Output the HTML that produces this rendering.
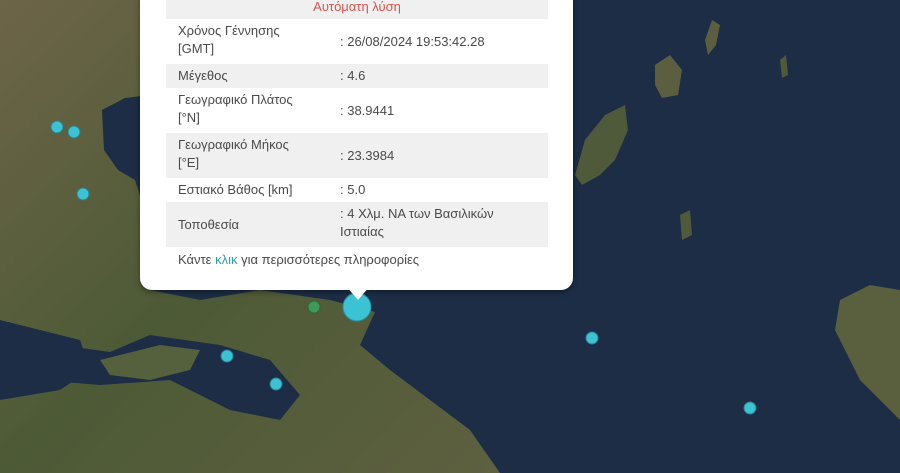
<!DOCTYPE html>
<html><head><meta charset="utf-8"><style>
body{margin:0;width:900px;height:473px;overflow:hidden;position:relative;background:#1c2d45;font-family:"Liberation Sans",sans-serif}
svg{position:absolute;left:0;top:0}
.pop{position:absolute;left:140px;top:-12px;width:433px;height:302px;background:#fff;border-radius:12px;box-shadow:0 2px 6px rgba(0,0,0,.4)}
.tip{position:absolute;left:346px;top:286px;width:0;height:0;border-left:12px solid transparent;border-right:12px solid transparent;border-top:14px solid #fff}
.row{position:absolute;left:166px;width:382px;font-size:13px;color:#4a4a4a;line-height:18px}
.row .k{position:absolute;left:12px}
.row .v{position:absolute;left:174px}
.g{background:#f0f0f0}
</style></head><body>
<svg width="900" height="473">
<defs><linearGradient id="l" x1="0" y1="0" x2="1" y2="1"><stop offset="0" stop-color="#6d6547"/><stop offset=".5" stop-color="#4d5a36"/><stop offset="1" stop-color="#5e6040"/></linearGradient></defs>
<path fill="url(#l)" d="M0 0H150V95L125 98L102 110L104 150L118 170L135 180L145 210L140 250L150 290L200 300L260 290L330 300L375 312L360 345L390 370L430 400L470 430L500 473H0V400L60 390L90 370L80 340L40 330L0 320Z"/>
<path fill="#1c2d45" d="M0 328L60 345L110 352L150 335L220 345L270 360L300 395L280 420L230 410L170 380L100 385L40 380L0 390Z"/>
<path fill="#55613c" d="M100 360L160 345L200 350L190 370L150 380L110 375Z"/>
<path fill="#5a603e" d="M840 300L870 285L900 290V420L880 400L860 380L845 350L835 330Z"/>
<path fill="#5b5f40" d="M655 65L670 55L682 70L678 95L662 98L655 85Z"/>
<path fill="#5b5f40" d="M705 40L712 20L720 25L716 45L708 55Z"/>
<path fill="#4f5a3a" d="M575 175L585 140L605 115L625 105L628 130L615 160L600 175L582 185Z"/>
<path fill="#4f5a3a" d="M680 215L690 210L692 235L682 240Z"/>
<path fill="#4f5a3a" d="M780 60L786 55L788 75L782 78Z"/>
<circle cx="57" cy="127" r="6" fill="#3cc3d3" stroke="#2a7f8c"/>
<circle cx="74" cy="132" r="6" fill="#3cc3d3" stroke="#2a7f8c"/>
<circle cx="83" cy="194" r="6" fill="#3cc3d3" stroke="#2a7f8c"/>
<circle cx="314" cy="307" r="6" fill="#3f9a5a" stroke="#2a6a3a"/>
<circle cx="357" cy="307" r="14" fill="#3cc3d3" stroke="#2a8f9c"/>
<circle cx="227" cy="356" r="6" fill="#3cc3d3" stroke="#2a7f8c"/>
<circle cx="276" cy="384" r="6" fill="#3cc3d3" stroke="#2a7f8c"/>
<circle cx="592" cy="338" r="6" fill="#3cc3d3" stroke="#2a7f8c"/>
<circle cx="750" cy="408" r="6" fill="#3cc3d3" stroke="#2a7f8c"/>
</svg>
<div class="pop"></div><div class="tip"></div>
<div class="row g" style="top:0;height:19px;text-align:center;color:#d9534f;line-height:14px">Αυτόματη λύση</div>
<div class="row" style="top:19px;height:45px"><span class="k" style="top:3px">Χρόνος Γέννησης<br>[GMT]</span><span class="v" style="top:14px">: 26/08/2024 19:53:42.28</span></div>
<div class="row g" style="top:64px;height:24px"><span class="k" style="top:3px">Μέγεθος</span><span class="v" style="top:3px">: 4.6</span></div>
<div class="row" style="top:88px;height:45px"><span class="k" style="top:3px">Γεωγραφικό Πλάτος<br>[°N]</span><span class="v" style="top:14px">: 38.9441</span></div>
<div class="row g" style="top:133px;height:45px"><span class="k" style="top:3px">Γεωγραφικό Μήκος<br>[°E]</span><span class="v" style="top:14px">: 23.3984</span></div>
<div class="row" style="top:178px;height:24px"><span class="k" style="top:3px">Εστιακό Βάθος [km]</span><span class="v" style="top:3px">: 5.0</span></div>
<div class="row g" style="top:202px;height:45px"><span class="k" style="top:14px">Τοποθεσία</span><span class="v" style="top:3px">: 4 Χλμ. ΝΑ των Βασιλικών<br>Ιστιαίας</span></div>
<div class="row" style="top:251px;height:20px"><span class="k">Κάντε <span style="color:#2a9db0">κλικ</span> για περισσότερες πληροφορίες</span></div>
</body></html>
